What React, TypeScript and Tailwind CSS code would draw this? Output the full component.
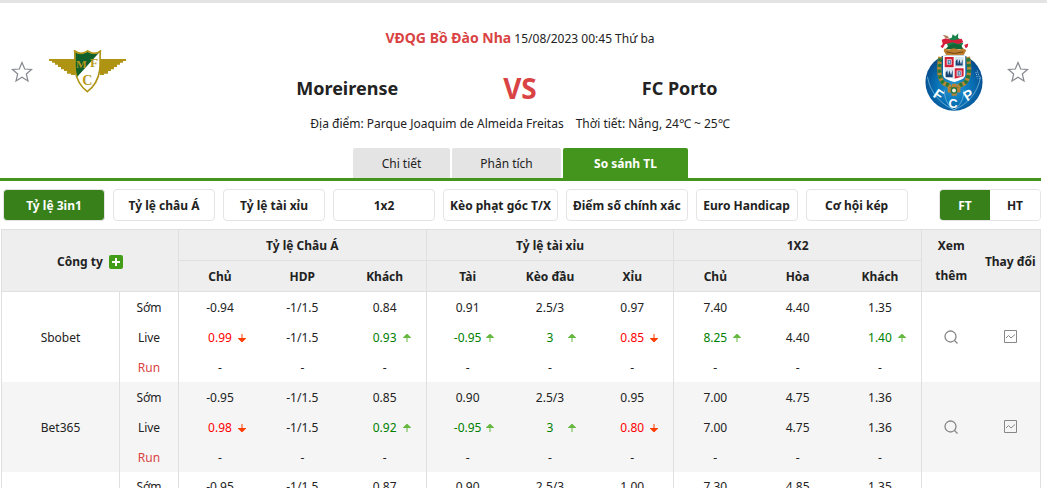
import { Fragment } from 'react'

type Trend = 'up' | 'down'

interface Odd {
  value: string
  trend?: Trend
}

interface Quote {
  label: string
  odds: Odd[]
}

interface Company {
  name: string
  quotes: Quote[]
}

const plain = (...values: string[]): Odd[] => values.map((value) => ({ value }))

const emptyRun: Quote = {
  label: 'Run',
  odds: plain('-', '-', '-', '-', '-', '-', '-', '-', '-'),
}

const companies: Company[] = [
  {
    name: 'Sbobet',
    quotes: [
      {
        label: 'Sớm',
        odds: plain('-0.94', '-1/1.5', '0.84', '0.91', '2.5/3', '0.97', '7.40', '4.40', '1.35'),
      },
      {
        label: 'Live',
        odds: [
          { value: '0.99', trend: 'down' },
          { value: '-1/1.5' },
          { value: '0.93', trend: 'up' },
          { value: '-0.95', trend: 'up' },
          { value: '3', trend: 'up' },
          { value: '0.85', trend: 'down' },
          { value: '8.25', trend: 'up' },
          { value: '4.40' },
          { value: '1.40', trend: 'up' },
        ],
      },
      emptyRun,
    ],
  },
  {
    name: 'Bet365',
    quotes: [
      {
        label: 'Sớm',
        odds: plain('-0.95', '-1/1.5', '0.85', '0.90', '2.5/3', '0.95', '7.00', '4.75', '1.36'),
      },
      {
        label: 'Live',
        odds: [
          { value: '0.98', trend: 'down' },
          { value: '-1/1.5' },
          { value: '0.92', trend: 'up' },
          { value: '-0.95', trend: 'up' },
          { value: '3', trend: 'up' },
          { value: '0.80', trend: 'down' },
          { value: '7.00' },
          { value: '4.75' },
          { value: '1.36' },
        ],
      },
      emptyRun,
    ],
  },
  {
    name: '',
    quotes: [
      {
        label: 'Sớm',
        odds: plain('-0.95', '-1/1.5', '0.87', '0.90', '2.5/3', '1.00', '7.30', '4.85', '1.35'),
      },
    ],
  },
]

const markets = [
  'Tỷ lệ 3in1',
  'Tỷ lệ châu Á',
  'Tỷ lệ tài xỉu',
  '1x2',
  'Kèo phạt góc T/X',
  'Điểm số chính xác',
  'Euro Handicap',
  'Cơ hội kép',
]

const groups = [
  { title: 'Tỷ lệ Châu Á', columns: ['Chủ', 'HDP', 'Khách'] },
  { title: 'Tỷ lệ tài xỉu', columns: ['Tài', 'Kèo đầu', 'Xỉu'] },
  { title: '1X2', columns: ['Chủ', 'Hòa', 'Khách'] },
]

function StarButton({ label }: { label: string }) {
  return (
    <button type="button" aria-label={label} className="block">
      <svg viewBox="0 0 22 22" className="h-[22px] w-[22px]" fill="none" stroke="#85898f" strokeWidth="1.2">
        <path d="M11 1.5L13.7 8L20.500 8.500L15.300 13L17 20L11 16.300L5 20L6.700 13L1.500 8.500L8.300 8Z" />
      </svg>
    </button>
  )
}

function MoreirenseCrest() {
  return (
    <svg viewBox="0 0 231 129" className="h-[43px] w-[77px]" role="img" aria-label="Moreirense">
      <path d="M0 27h78v48H66v-4H54v-8H45v-5H36v-7H27v-7H18v-6H9v-5H0z" fill="#af9413" />
      <path d="M231 27h-78v48h12v-4h12v-8h9v-5h9v-7h9v-7h9v-6h9v-5h9z" fill="#af9413" />
      <path
        d="M77 3c6 5 12 7 19 7 8 0 14-3 20-7 6 4 12 7 20 7 7 0 13-2 18-7-2 20 1 38-2 58-4 28-20 51-37 64-16-12-32-34-36-62C76 43 79 23 77 3z"
        fill="#fff"
      />
      <path d="M78 5c14 7 25 7 38 0 11 7 22 8 34 3L82 83C76 56 80 30 78 5z" fill="#10602b" />
      <path
        d="M77 3c6 5 12 7 19 7 8 0 14-3 20-7 6 4 12 7 20 7 7 0 13-2 18-7-2 20 1 38-2 58-4 28-20 51-37 64-16-12-32-34-36-62C76 43 79 23 77 3z"
        fill="none"
        stroke="#af9413"
        strokeWidth="5"
      />
      <g fill="#b8991a" fontFamily="'Liberation Serif', serif" fontWeight="700" textAnchor="middle">
        <text x="97" y="53" fontSize="34">M</text>
        <text x="135" y="52" fontSize="40">F</text>
        <text x="115" y="105" fontSize="42">C</text>
      </g>
    </svg>
  )
}

function PortoCrest() {
  return (
    <svg viewBox="0 0 174 235" className="h-[78px] w-[58px]" role="img" aria-label="FC Porto">
      <defs>
        <radialGradient id="porto-ball" cx="50%" cy="58%" r="55%">
          <stop offset="0" stopColor="#2699d6" />
          <stop offset="0.55" stopColor="#0872b6" />
          <stop offset="1" stopColor="#064b8b" />
        </radialGradient>
      </defs>
      <circle cx="87" cy="148" r="86" fill="url(#porto-ball)" />
      <g fill="none" stroke="#8cc5e6" strokeWidth="2">
        <path d="M7 132c8 48 42 84 80 99 40-15 72-51 80-99" />
        <path d="M58 172c0 28 12 48 29 60 17-12 30-32 30-60" />
      </g>
      {/* garland */}
      <path
        d="M46 72c-6 34-4 66 10 79 10 6 18 4 22 18M129 72c6 34 4 66-10 79-10 6-18 4-22 18"
        fill="none"
        stroke="#b98735"
        strokeWidth="13"
      />
      <path
        d="M46 76c-6 34-4 62 10 75 10 6 18 4 22 18M129 76c6 34 4 62-10 75-10 6-18 4-22 18"
        fill="none"
        stroke="#26783b"
        strokeWidth="12"
        strokeDasharray="10 7"
      />
      {/* dragon and crown */}
      <path d="M65 31l6-14 9-3 3-10 8 6 9-9-1 13 13 9-9 3 12 5-5 8H68z" fill="#16844a" />
      <path d="M53 5l15 4 5 8-12-3z" fill="#ad7a52" />
      <path
        d="M50 20l12-4 21 6 27-5 5 11-15 5-18-5-22 6-7 12-7-5 7-8zM118 36l12-4-2 10-6 4z"
        fill="#d61e3b"
      />
      <path d="M71 38l15-6 22 4 7 12H62z" fill="#126638" />
      <path d="M58 47l14 3 14-4 16 4 14-3 8 5-8 15H64L56 54z" fill="#bd7f2e" />
      <path d="M64 57q23 9 51 0" fill="none" stroke="#744519" strokeWidth="3" />
      {/* quartered shield */}
      <path d="M54 67h67v58c0 14-16 17-33 23-17-6-34-9-34-23z" fill="#fff" />
      <path d="M59 72h27v31H59zM89 106h27v24l-27 8z" fill="#d02037" />
      <path d="M89 72h27v31H89zM59 106h27v32l-27-8z" fill="#d8e6ef" />
      <path d="M65 79h15v17H65zM95 113h15v17H95z" fill="#f4dce0" />
      <path d="M68 81h9v13h-9zM98 115h9v13h-9z" fill="#225b9b" />
      <path d="M71 83h3v9h-3zM101 117h3v9h-3z" fill="#fff" />
      <path
        d="M92 98V84l5-6 2 16 4-15 5 16 5-17v20zM62 133v-14l5-6 2 14 4-14 5 14 5-16v22z"
        fill="#164274"
      />
      <path d="M81 153h14v11h11v15H95v10H80v-10H68v-15h13z" fill="#bb8133" />
      <circle cx="87" cy="173" r="8" fill="#f5edd8" stroke="#207044" strokeWidth="4" />
      <path d="M157 113l8 25M153 118l5 19" stroke="#9acbe8" strokeWidth="3" strokeDasharray="3 3" />
      <g
        fill="#fff"
        fontFamily="'Liberation Sans', sans-serif"
        fontWeight="700"
        fontSize="42"
        textAnchor="middle"
      >
        <text x="40" y="200" transform="rotate(34 40 186)">F</text>
        <text x="84" y="225" fontSize="38">C</text>
        <text x="131" y="201" transform="rotate(-32 131 187)">P</text>
      </g>
    </svg>
  )
}

function TrendArrow({ trend }: { trend: Trend }) {
  return (
    <svg
      viewBox="0 0 8 8"
      className="h-2 w-2"
      fill={trend === 'up' ? '#66b840' : '#ff3c00'}
      role="img"
      aria-label={trend === 'up' ? 'Tăng' : 'Giảm'}
    >
      {trend === 'up' ? (
        <path d="M3.500 0h1L8 3.500V4H4.500v4h-1V4H0v-.5z" />
      ) : (
        <path d="M3.500 0h1v4H8v.5L4.500 8h-1L0 4.500V4h3.500z" />
      )}
    </svg>
  )
}

function OddValue({ odd }: { odd: Odd }) {
  if (!odd.trend) {
    return <>{odd.value}</>
  }

  return (
    <span className="flex items-center justify-center">
      <span className="w-3" />
      <span className={`w-8 text-center ${odd.trend === 'up' ? 'text-[#008000]' : 'text-[#ff0000]'}`}>
        {odd.value}
      </span>
      <span className="flex w-3 justify-center">
        <TrendArrow trend={odd.trend} />
      </span>
    </span>
  )
}

function MatchHeader() {
  return (
    <header className="flex items-start justify-between pr-3 pl-[11px]">
      <div className="flex w-[116px] items-center gap-4 pt-[22px]">
        <StarButton label="Theo dõi Moreirense" />
        <MoreirenseCrest />
      </div>

      <div className="text-center">
        <div className="leading-5">
          <a href="#league" className="text-sm font-bold text-[#d94343]">VĐQG Bồ Đào Nha</a>{' '}
          <span>15/08/2023 00:45 Thứ ba</span>
        </div>
        <div className="mt-[23px] grid grid-cols-[100px_auto_100px] items-center justify-center gap-[105px] font-bold whitespace-nowrap">
          <a href="#home" className="flex justify-end text-lg leading-8">Moreirense</a>
          <span className="text-[28px] leading-8 text-[#d94343]">VS</span>
          <a href="#away" className="text-left text-lg leading-8">FC Porto</a>
        </div>
        <div className="mt-2.5 flex justify-center gap-3 leading-5">
          <span>Địa điểm: Parque Joaquim de Almeida Freitas</span>
          <span>Thời tiết: Nắng, 24℃ ~ 25℃</span>
        </div>
      </div>

      <div className="flex w-[116px] items-center justify-end gap-6 pt-[5px]">
        <PortoCrest />
        <StarButton label="Theo dõi FC Porto" />
      </div>
    </header>
  )
}

function PageTabs() {
  return (
    <nav className="mt-3.5 flex justify-center gap-0.5 border-b-[3px] border-[#44951d] text-center leading-8">
      <a href="#detail" className="h-[30px] w-[97px] rounded-t-xs bg-[#e4e4e4]">Chi tiết</a>
      <a href="#analysis" className="h-[30px] w-[109px] rounded-t-xs bg-[#e4e4e4]">Phân tích</a>
      <a href="#odds" className="h-[30px] w-[125px] rounded-t-xs bg-[#44951d] font-bold text-white">So sánh TL</a>
    </nav>
  )
}

function MarketFilter() {
  return (
    <div className="flex items-center justify-between py-2 pl-[3px] font-bold">
      <div className="flex gap-2">
        {markets.map((market, index) => (
          <button
            key={market}
            type="button"
            className={`h-8 min-w-[102px] rounded border border-[#e4e4e4] px-1.5 pt-0.5 whitespace-nowrap ${
              index === 0 ? 'bg-[#38801a] text-white' : 'bg-white'
            }`}
          >
            {market}
          </button>
        ))}
      </div>
      <div className="flex h-8 w-[102px] overflow-hidden rounded border border-[#e4e4e4]">
        <button type="button" className="flex-1 bg-[#38801a] pt-0.5 text-white">FT</button>
        <button type="button" className="flex-1 bg-white pt-0.5">HT</button>
      </div>
    </div>
  )
}

function OddsTable() {
  return (
    <table className="ml-px w-[calc(100%-1px)] table-fixed border-collapse border border-[#e0e0e0] text-center">
      <colgroup>
        <col className="w-[118px]" />
        <col className="w-[59px]" />
        <col span={9} />
        <col className="w-[59px]" />
        <col className="w-[60px]" />
      </colgroup>
      <thead className="bg-[#eeeeee] leading-7">
        <tr className="h-[31px]">
          <th colSpan={2} rowSpan={2} className="border border-[#e0e0e0] pt-0.5">
            <span className="flex items-center justify-center gap-1.5">
              Công ty
              <button type="button" aria-label="Thêm công ty" className="rounded-xs bg-[#449d19]">
                <svg viewBox="0 0 14 14" className="h-3.5 w-3.5" stroke="#fff" strokeWidth="2">
                  <path d="M7 3v8M3 7h8" />
                </svg>
              </button>
            </span>
          </th>
          {groups.map((group) => (
            <th key={group.title} colSpan={3} className="border border-[#e0e0e0] pt-0.5">{group.title}</th>
          ))}
          <th rowSpan={2} className="border-y border-[#e0e0e0] px-2 leading-[30px]">Xem thêm</th>
          <th rowSpan={2} className="border-y border-[#e0e0e0] pt-0.5 whitespace-nowrap">Thay đổi</th>
        </tr>
        <tr className="h-[31px]">
          {groups.map((group) => (
            <Fragment key={group.title}>
              {group.columns.map((column, index) => (
                <th
                  key={column}
                  className={`border-b border-[#e0e0e0] pt-0.5 ${index === 2 ? 'border-r' : ''}`}
                >
                  {column}
                </th>
              ))}
            </Fragment>
          ))}
        </tr>
      </thead>
      {companies.map((company, companyIndex) => (
        <tbody key={companyIndex} className={companyIndex % 2 ? 'bg-[#f5f5f5]' : 'bg-white'}>
          {company.quotes.map((quote, quoteIndex) => (
            <tr key={quote.label} className="h-[30px]">
              {quoteIndex === 0 && (
                <td rowSpan={company.quotes.length} className="border-r border-[#e0e0e0] pt-0.5">
                  {company.name}
                </td>
              )}
              <td className={`border-r border-[#e0e0e0] pt-0.5 ${quote.label === 'Run' ? 'text-[#d94343]' : ''}`}>
                {quote.label}
              </td>
              {quote.odds.map((odd, oddIndex) => (
                <td key={oddIndex} className={`pt-0.5 ${oddIndex % 3 === 2 ? 'border-r border-[#e0e0e0]' : ''}`}>
                  <OddValue odd={odd} />
                </td>
              ))}
              {quoteIndex === 0 && (
                <>
                  <td rowSpan={company.quotes.length}>
                    {company.name && (
                      <button type="button" aria-label={`Xem thêm ${company.name}`} className="mx-auto block">
                        <svg viewBox="0 0 14 14" className="h-3.5 w-3.5" fill="none" stroke="#888" strokeWidth="1.3">
                          <circle cx="6.500" cy="6.500" r="5.500" />
                          <path d="M10.500 10.500l3 3" />
                        </svg>
                      </button>
                    )}
                  </td>
                  <td rowSpan={company.quotes.length}>
                    {company.name && (
                      <button type="button" aria-label={`Thay đổi ${company.name}`} className="mx-auto block">
                        <svg viewBox="0 0 13 13" className="h-[13px] w-[13px]" fill="none" stroke="#888">
                          <path d="M.5.5h12v12H.5z" />
                          <path d="M2 8l2.500-2.500 2.500 2.500L11 4.500" />
                        </svg>
                      </button>
                    )}
                  </td>
                </>
              )}
            </tr>
          ))}
        </tbody>
      ))}
    </table>
  )
}

export default function App() {
  return (
    <div className="h-screen overflow-hidden border-t-[3px] border-[#e4e4e4] bg-white font-['Noto_Sans','Noto_Sans_CJK_SC',sans-serif] text-xs text-[#222222]">
      <main className="mr-1.5 pt-[25px]">
        <MatchHeader />
        <PageTabs />
        <MarketFilter />
        <OddsTable />
      </main>
    </div>
  )
}
